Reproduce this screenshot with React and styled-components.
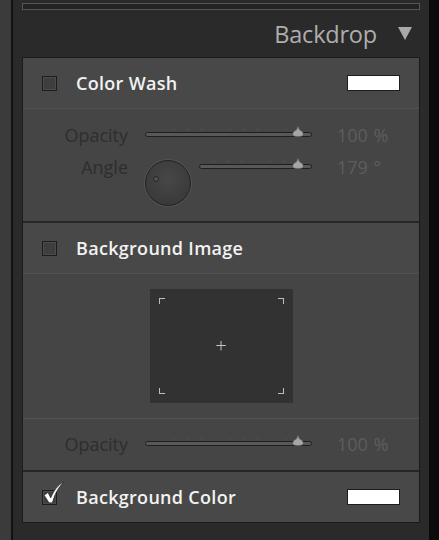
import React from "react";
import styled, { createGlobalStyle } from "styled-components";

const GlobalStyle = createGlobalStyle`
  html, body {
    margin: 0;
    padding: 0;
    background: #2a2a2a;
  }
  body {
    font-family: "Open Sans", "Noto Sans", "Liberation Sans", sans-serif;
  }
`;

const Frame = styled.div`
  display: flex;
  width: 439px;
  height: 540px;
  overflow: hidden;
`;

const LeftStrip = styled.div`
  width: 11px;
  background: #3b3b3b;
  border-right: 2px solid #121212;
`;

const RightStrip = styled.div`
  width: 10px;
  background: #0b0b0b;
`;

const Main = styled.div`
  flex: 1;
  background: #2a2a2a;
  padding: 0 9px;
  display: flex;
  flex-direction: column;
`;

const PrevBox = styled.div`
  margin-top: 3px;
  height: 5px;
  border: 1px solid #555;
  background: #232323;
`;

const Header = styled.div`
  height: 47px;
  display: flex;
  align-items: center;
  justify-content: flex-end;
  gap: 21px;
  padding-right: 8px;
  color: #aeaeae;
  font-size: 23.5px;
  letter-spacing: -0.2px;
`;

const Panel = styled.div`
  border: 1px solid #1c1c1c;
  background: #474747;
  display: flex;
  flex-direction: column;
`;

const CheckRow = styled.div`
  height: 50px;
  display: flex;
  align-items: center;
  padding: 0 19px;
  background: #484848;
`;

const Box = styled.div`
  position: relative;
  width: 13px;
  height: 13px;
  border: 1px solid #1d1d1d;
  background: #3e3e3e;
  box-shadow: inset 0 0 0 1px #4c4c4c;
  flex: none;
`;

const CheckMark = styled.svg`
  position: absolute;
  left: 0px;
  top: -10px;
`;

const RowTitle = styled.span`
  margin-left: 19px;
  flex: 1;
  color: #f2f2f2;
  font-size: 18px;
  font-weight: 600;
  letter-spacing: 0.3px;
`;

const Swatch = styled.div`
  width: 51px;
  height: 14px;
  background: #ffffff;
  border: 1px solid #1e1e1e;
`;

const Line = styled.div`
  height: ${(p) => p.$h || 1}px;
  background: ${(p) => p.$c || "#525252"};
`;

const SubArea = styled.div`
  height: ${(p) => p.$h}px;
  background: #454545;
  display: flex;
  flex-direction: column;
  padding-top: ${(p) => p.$pt || 0}px;
  box-sizing: border-box;
  align-items: ${(p) => (p.$center ? "center" : "stretch")};
`;

const SliderRow = styled.div`
  display: flex;
  align-items: flex-start;
  height: 32px;
`;

const Label = styled.div`
  width: 105px;
  text-align: right;
  line-height: 20px;
  font-size: 18px;
  color: #2e2e2e;
`;

const Controls = styled.div`
  width: 167px;
  margin-left: 17px;
  display: flex;
  align-items: flex-start;
`;

const Value = styled.div`
  margin-left: 25px;
  line-height: 20px;
  font-size: 18px;
  color: #5d5d5d;
  word-spacing: 1px;
`;

const SliderWrap = styled.div`
  position: relative;
  flex: 1;
  height: 20px;
  margin-left: ${(p) => p.$ml || 0}px;
`;

const Ticks = styled.div`
  position: absolute;
  left: 14px;
  right: 14px;
  top: 4px;
  height: 1px;
  background-image: repeating-linear-gradient(
    to right,
    #515151 0 2px,
    transparent 2px 14px
  );
`;

const Track = styled.div`
  position: absolute;
  left: 0;
  right: 0;
  top: 7px;
  height: 3px;
  border: 1px solid #1f1f1f;
  border-radius: 3px;
  background: #585858;
`;

const Thumb = styled.svg`
  position: absolute;
  right: 8px;
  top: 1px;
`;

const Knob = styled.div`
  position: relative;
  width: 44px;
  height: 44px;
  margin-top: 3px;
  border-radius: 50%;
  border: 1px solid #232323;
  background: radial-gradient(circle at 50% 40%, #474747 0%, #3b3b3b 70%, #333 100%);
  box-shadow: 0 0 0 1px #545454;
  flex: none;
`;

const KnobDot = styled.div`
  position: absolute;
  left: 7px;
  top: 15px;
  width: 4px;
  height: 4px;
  border-radius: 50%;
  border: 1px solid #262626;
  background: #505050;
`;

const Well = styled.div`
  position: relative;
  width: 143px;
  height: 114px;
  background: #323232;
  display: flex;
  align-items: center;
  justify-content: center;
`;

const Corner = styled.div`
  position: absolute;
  width: 5px;
  height: 5px;
  border-color: #bdbdbd;
  border-style: solid;
  border-width: 0;
  ${(p) => (p.$top ? "top: 9px; border-top-width: 1px;" : "bottom: 9px; border-bottom-width: 1px;")}
  ${(p) => (p.$left ? "left: 9px; border-left-width: 1px;" : "right: 9px; border-right-width: 1px;")}
`;

const Plus = styled.span`
  color: #c8c8c8;
  font-size: 20px;
  font-weight: 300;
  line-height: 1;
`;

const Bottom = styled.div`
  flex: 1;
  background: #2a2a2a;
`;

function Slider({ ml }) {
  return (
    <SliderWrap $ml={ml}>
      <Ticks />
      <Track />
      <Thumb width="12" height="12" viewBox="0 0 12 12">
        <path d="M6 0.5 L7.5 4 C10.5 5 11.5 7 11 9 C10 11 2 11 1 9 C0.5 7 1.5 5 4.5 4 Z" fill="#a6a6a6" stroke="#6a6a6a" strokeWidth="0.6" />
      </Thumb>
    </SliderWrap>
  );
}

function Check({ checked }) {
  return (
    <Box>
      {checked && (
        <CheckMark width="22" height="24" viewBox="0 0 20 22">
          <path d="M1 13 L4.5 10.5 L7 15.5 C10 9 13 4 19 1 C14 6 11 11 8.5 20 L5.5 20 Z" fill="#ffffff" stroke="#111" strokeWidth="0.5" />
        </CheckMark>
      )}
    </Box>
  );
}

export default function App() {
  return (
    <>
      <GlobalStyle />
      <Frame>
        <LeftStrip />
        <Main>
          <PrevBox />
          <Header>
            <span>Backdrop</span>
            <svg width="14" height="13" viewBox="0 0 14 13">
              <path d="M0 0 H14 L7 13 Z" fill="#a9a9a9" />
            </svg>
          </Header>
          <Panel>
            <CheckRow>
              <Check />
              <RowTitle>Color Wash</RowTitle>
              <Swatch />
            </CheckRow>
            <Line />
            <SubArea $h={112} $pt={16}>
              <SliderRow>
                <Label>Opacity</Label>
                <Controls>
                  <Slider />
                </Controls>
                <Value>100 %</Value>
              </SliderRow>
              <SliderRow>
                <Label>Angle</Label>
                <Controls>
                  <Knob>
                    <KnobDot />
                  </Knob>
                  <Slider ml={8} />
                </Controls>
                <Value>179 °</Value>
              </SliderRow>
            </SubArea>
            <Line $h={2} $c="#262626" />
            <CheckRow>
              <Check />
              <RowTitle>Background Image</RowTitle>
            </CheckRow>
            <Line />
            <SubArea $h={144} $pt={15} $center>
              <Well>
                <Corner $top $left />
                <Corner $top />
                <Corner $left />
                <Corner />
                <Plus>+</Plus>
              </Well>
            </SubArea>
            <Line />
            <SubArea $h={51} $pt={15}>
              <SliderRow>
                <Label>Opacity</Label>
                <Controls>
                  <Slider />
                </Controls>
                <Value>100 %</Value>
              </SliderRow>
            </SubArea>
            <Line $h={2} $c="#262626" />
            <CheckRow>
              <Check checked />
              <RowTitle>Background Color</RowTitle>
              <Swatch />
            </CheckRow>
          </Panel>
          <Bottom />
        </Main>
        <RightStrip />
      </Frame>
    </>
  );
}
